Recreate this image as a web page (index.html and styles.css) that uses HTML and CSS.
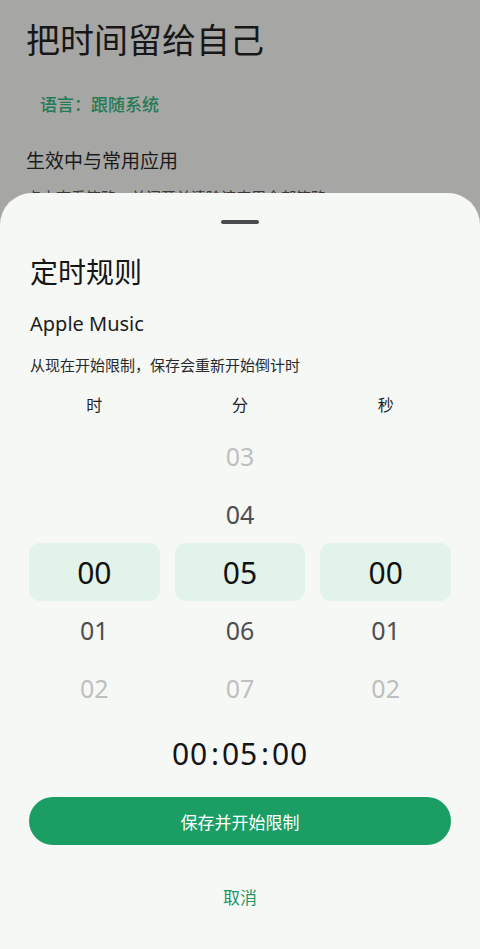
FILE: index.html
```html
<!DOCTYPE html>
<html lang="zh-CN">
<head>
<meta charset="utf-8">
<title>定时规则</title>
<link rel="stylesheet" href="styles.css">
</head>
<body>
<main class="page">
  <h1 class="page-title">把时间留给自己</h1>
  <div class="lang">语言：跟随系统</div>
  <h2 class="section-title">生效中与常用应用</h2>
  <p class="section-desc">点击查看策略，关闭开关清除该应用全部策略</p>
</main>
<section class="sheet">
  <div class="handle"></div>
  <h3 class="sheet-title">定时规则</h3>
  <div class="app-name">Apple Music</div>
  <p class="hint">从现在开始限制，保存会重新开始倒计时</p>
  <div class="labels">
    <span>时</span><span>分</span><span>秒</span>
  </div>
  <div class="picker">
    <div class="col">
      <div class="cell"></div>
      <div class="cell"></div>
      <div class="cell sel">00</div>
      <div class="cell near">01</div>
      <div class="cell far">02</div>
    </div>
    <div class="col">
      <div class="cell far">03</div>
      <div class="cell near">04</div>
      <div class="cell sel">05</div>
      <div class="cell near">06</div>
      <div class="cell far">07</div>
    </div>
    <div class="col">
      <div class="cell"></div>
      <div class="cell"></div>
      <div class="cell sel">00</div>
      <div class="cell near">01</div>
      <div class="cell far">02</div>
    </div>
  </div>
  <div class="timer"><span class="num">00</span><span class="colon">:</span><span class="num">05</span><span class="colon">:</span><span class="num">00</span></div>
  <button class="primary">保存并开始限制</button>
  <button class="cancel">取消</button>
</section>
</body>
</html>
```
FILE: styles.css
```css
* { box-sizing: border-box; }
html, body {
  margin: 0;
  padding: 0;
  height: 100%;
}
body {
  background: #a6a6a5;
  font-family: "Noto Sans", "Noto Sans CJK SC", sans-serif;
  overflow: hidden;
  position: relative;
}
.page {
  padding: 17px 26px 0 26px;
}
.page-title {
  margin: 0;
  font-size: 34px;
  line-height: 44px;
  font-weight: 400;
  color: #171717;
  font-family: "Noto Sans CJK SC", sans-serif;
}
.lang {
  margin: 31px 0 0 14px;
  font-size: 17px;
  line-height: 24px;
  font-weight: 500;
  color: #237b55;
  font-family: "Noto Sans CJK SC", sans-serif;
}
.section-title {
  margin: 31px 0 0 0;
  font-size: 19px;
  line-height: 26px;
  font-weight: 400;
  color: #1a1a1a;
  font-family: "Noto Sans CJK SC", sans-serif;
}
.section-desc {
  margin: 13px 0 0 0;
  font-size: 15px;
  line-height: 22px;
  color: #3a3a3a;
  font-family: "Noto Sans CJK SC", sans-serif;
}
.sheet {
  position: absolute;
  top: 193px;
  left: 0;
  right: 0;
  bottom: 0;
  background: #f6f8f6;
  border-radius: 32px 32px 0 0;
  padding: 27px 29px 0 29px;
  display: flex;
  flex-direction: column;
}
.handle {
  align-self: center;
  width: 38px;
  height: 4px;
  border-radius: 2px;
  background: #4a4b4d;
}
.sheet-title {
  margin: 29px 0 0 1px;
  font-size: 28px;
  line-height: 36px;
  font-weight: 400;
  color: #161616;
  font-family: "Noto Sans CJK SC", sans-serif;
}
.app-name {
  margin: 21px 0 0 1px;
  font-size: 20px;
  line-height: 28px;
  color: #1c1c1c;
  font-family: "Noto Sans", sans-serif;
}
.hint {
  margin: 16px 0 0 1px;
  font-size: 15px;
  line-height: 22px;
  color: #2a2a2a;
  font-family: "Noto Sans CJK SC", sans-serif;
}
.labels {
  margin-top: 16px;
  display: grid;
  grid-template-columns: 1fr 1fr 1fr;
  column-gap: 15px;
  text-align: center;
  font-size: 16px;
  line-height: 24px;
  color: #1f1f1f;
  font-family: "Noto Sans CJK SC", sans-serif;
}
.picker {
  margin-top: 11px;
  display: grid;
  grid-template-columns: 1fr 1fr 1fr;
  column-gap: 15px;
}
.col {
  display: flex;
  flex-direction: column;
}
.cell {
  height: 58px;
  display: flex;
  align-items: center;
  justify-content: center;
  font-family: "Noto Sans", sans-serif;
  font-size: 25px;
}
.cell.far { color: #bfbfbf; }
.cell.near { color: #4f4f4f; }
.cell.sel {
  background: #e2f3e9;
  border-radius: 11px;
  font-size: 30px;
  color: #111111;
}
.timer {
  margin-top: 17px;
  display: flex;
  justify-content: center;
  font-family: "Noto Sans", sans-serif;
  font-size: 30px;
  line-height: 40px;
  color: #141414;
}
.timer .num {
  letter-spacing: 0.8px;
  font-variant-numeric: tabular-nums;
}
.timer .colon {
  display: inline-block;
  width: 14px;
  text-align: center;
}
.primary {
  margin-top: 23px;
  height: 48px;
  border: none;
  border-radius: 24px;
  background: #1a9e63;
  color: #ffffff;
  font-size: 17px;
  font-family: "Noto Sans CJK SC", sans-serif;
  padding: 0;
}
.cancel {
  margin-top: 40px;
  align-self: center;
  height: 24px;
  border: none;
  background: none;
  padding: 0;
  color: #1f9464;
  font-size: 17px;
  line-height: 24px;
  font-family: "Noto Sans CJK SC", sans-serif;
}
```
